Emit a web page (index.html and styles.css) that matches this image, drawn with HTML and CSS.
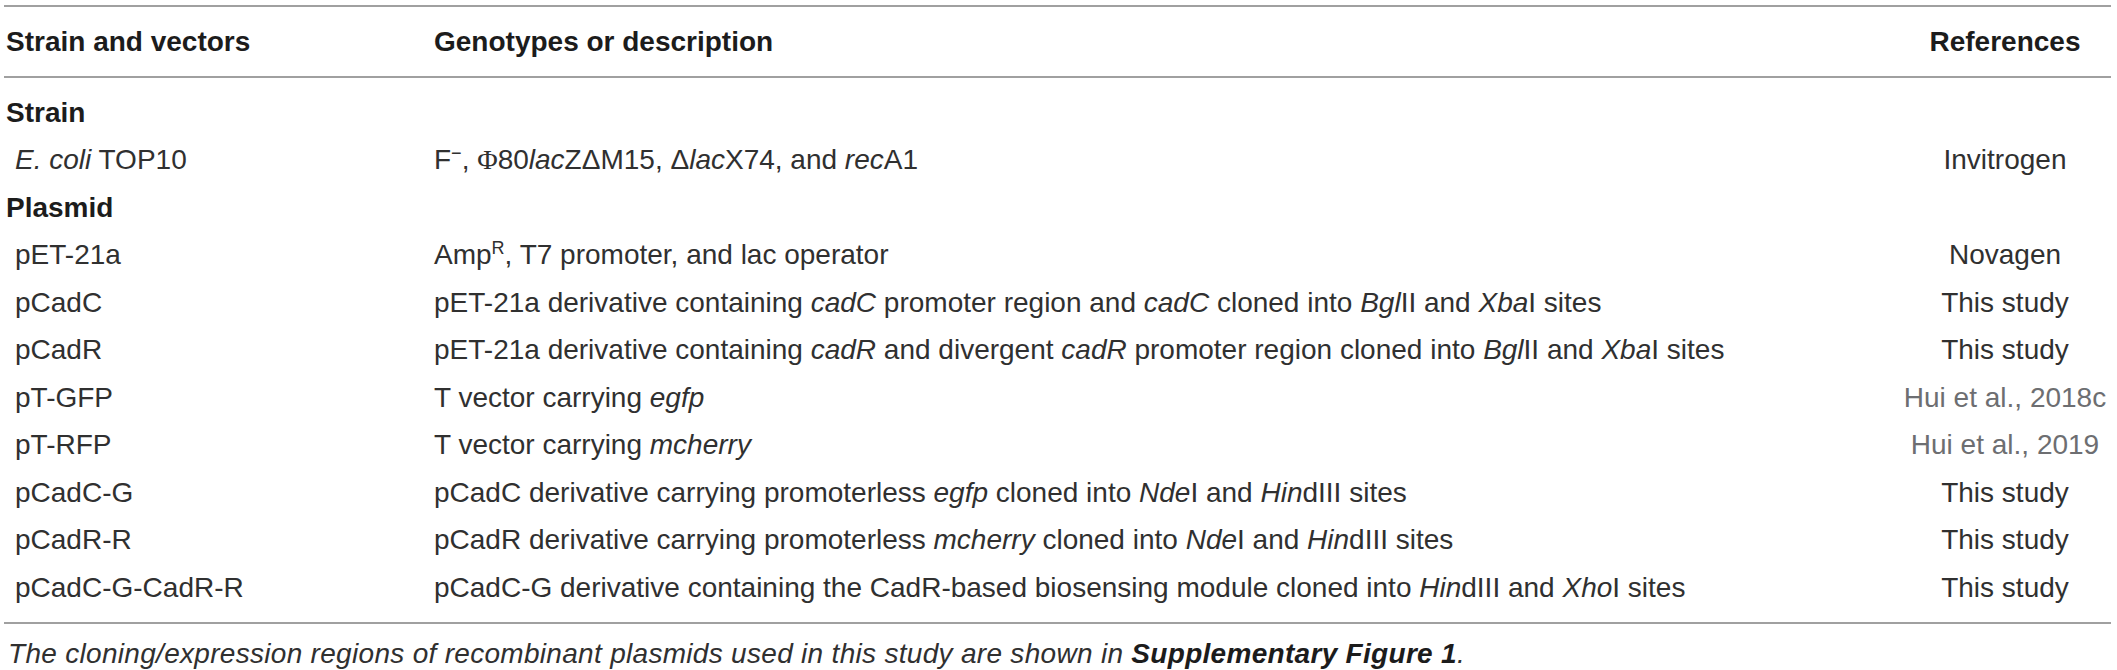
FILE: index.html
```html
<!DOCTYPE html>
<html lang="en">
<head>
<meta charset="utf-8">
<title>Strains and vectors</title>
<link rel="stylesheet" href="styles.css">
</head>
<body>
<div class="page">
  <div class="tbl">
    <div class="row head">
      <div class="c1">Strain and vectors</div>
      <div class="c2">Genotypes or description</div>
      <div class="c3">References</div>
    </div>
    <div class="tbody">
      <div class="row section"><div class="c1">Strain</div></div>
      <div class="row">
        <div class="c1"><i>E. coli</i> TOP10</div>
        <div class="c2">F<span class="sup">−</span>, <span class="serif">Φ</span>80<i>lac</i>Z<span class="delta">Δ</span>M15, <span class="delta">Δ</span><i>lac</i>X74, and <i>rec</i>A1</div>
        <div class="c3">Invitrogen</div>
      </div>
      <div class="row section"><div class="c1">Plasmid</div></div>
      <div class="row">
        <div class="c1">pET-21a</div>
        <div class="c2">Amp<span class="sup">R</span>, T7 promoter, and lac operator</div>
        <div class="c3">Novagen</div>
      </div>
      <div class="row">
        <div class="c1">pCadC</div>
        <div class="c2">pET-21a derivative containing <i>cadC</i> promoter region and <i>cadC</i> cloned into <i>Bgl</i>II and <i>Xba</i>I sites</div>
        <div class="c3">This study</div>
      </div>
      <div class="row">
        <div class="c1">pCadR</div>
        <div class="c2">pET-21a derivative containing <i>cadR</i> and divergent <i>cadR</i> promoter region cloned into <i>Bgl</i>II and <i>Xba</i>I sites</div>
        <div class="c3">This study</div>
      </div>
      <div class="row">
        <div class="c1">pT-GFP</div>
        <div class="c2">T vector carrying <i>egfp</i></div>
        <div class="c3 ref">Hui et al., 2018c</div>
      </div>
      <div class="row">
        <div class="c1">pT-RFP</div>
        <div class="c2">T vector carrying <i>mcherry</i></div>
        <div class="c3 ref">Hui et al., 2019</div>
      </div>
      <div class="row">
        <div class="c1">pCadC-G</div>
        <div class="c2">pCadC derivative carrying promoterless <i>egfp</i> cloned into <i>Nde</i>I and <i>Hin</i>dIII sites</div>
        <div class="c3">This study</div>
      </div>
      <div class="row">
        <div class="c1">pCadR-R</div>
        <div class="c2">pCadR derivative carrying promoterless <i>mcherry</i> cloned into <i>Nde</i>I and <i>Hin</i>dIII sites</div>
        <div class="c3">This study</div>
      </div>
      <div class="row">
        <div class="c1">pCadC-G-CadR-R</div>
        <div class="c2">pCadC-G derivative containing the CadR-based biosensing module cloned into <i>Hin</i>dIII and <i>Xho</i>I sites</div>
        <div class="c3">This study</div>
      </div>
    </div>
  </div>
  <p class="caption">The cloning/expression regions of recombinant plasmids used in this study are shown in <b>Supplementary Figure 1</b>.</p>
</div>
</body>
</html>
```

FILE: styles.css
```css
html, body {
  margin: 0;
  padding: 0;
  background: #ffffff;
}

body {
  font-family: "Liberation Sans", Arial, Helvetica, sans-serif;
  color: #303030;
}

.page {
  padding: 5px 6px 0 4px;
}

.tbl {
  border-top: 2px solid #a0a0a0;
  border-bottom: 2px solid #a0a0a0;
}

.row {
  display: grid;
  grid-template-columns: 430px 1fr 212px;
  align-items: center;
  height: 47.5px;
  font-size: 28px;
  line-height: 34px;
  white-space: nowrap;
}

.head {
  height: 69px;
  border-bottom: 2px solid #a0a0a0;
  font-weight: bold;
  color: #1c1c1c;
}

.tbody {
  padding: 11px 0 10px;
}

.c1 {
  padding-left: 11px;
}

.head .c1,
.section .c1 {
  padding-left: 2px;
}

.section {
  font-weight: bold;
  color: #1c1c1c;
}

.c3 {
  text-align: center;
}

.ref {
  color: #6d6e71;
}

.sup {
  font-size: 18px;
  line-height: 0;
  vertical-align: 10px;
}

.serif {
  font-family: "Liberation Serif", "Times New Roman", serif;
}

.caption {
  margin: 13px 0 0 4px;
  font-size: 28px;
  line-height: 34px;
  letter-spacing: 0.3px;
  font-style: italic;
  white-space: nowrap;
}

.caption b {
  font-weight: bold;
  color: #1c1c1c;
}
```
